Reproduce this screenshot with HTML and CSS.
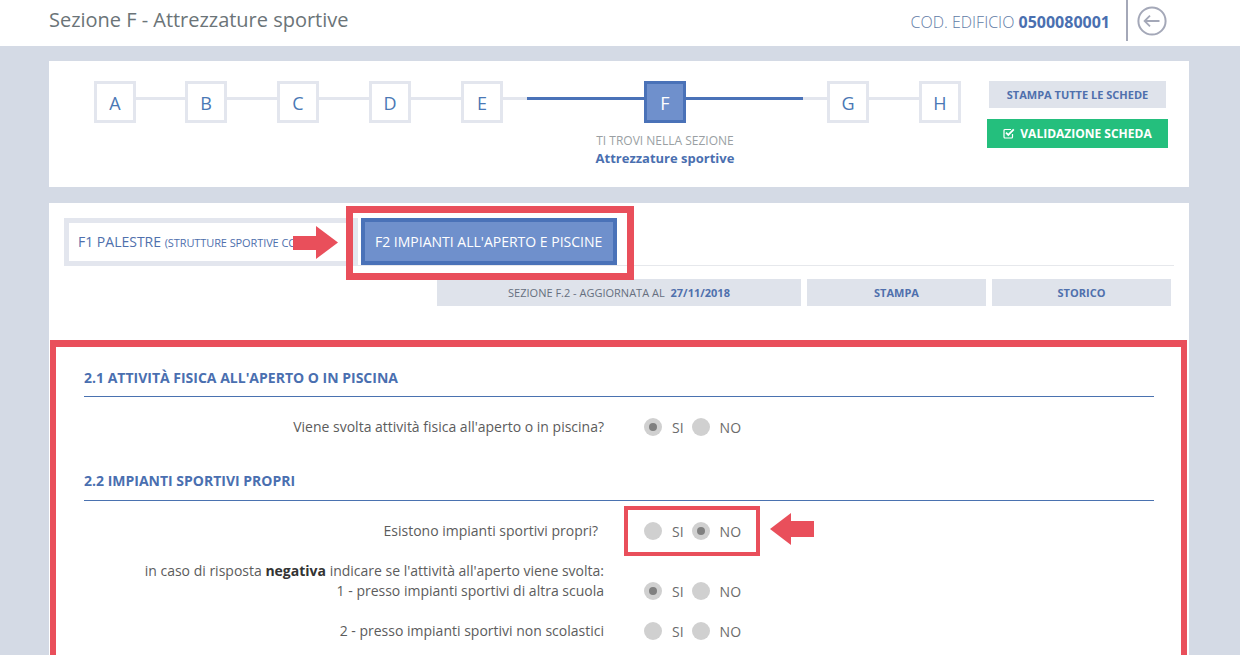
FILE: index.html
```html
<!DOCTYPE html>
<html lang="it">
<head>
<meta charset="utf-8">
<title>Sezione F - Attrezzature sportive</title>
<link rel="stylesheet" href="styles.css">
</head>
<body>
<header class="topbar">
  <h1 class="title">Sezione F - Attrezzature sportive</h1>
  <div class="code">COD. EDIFICIO <b>0500080001</b></div>
  <div class="back">
    <svg width="30" height="30" viewBox="0 0 30 30" fill="none" stroke="#a4a8b8" stroke-width="2"><circle cx="15" cy="15" r="13.6"/><path d="M22.5 15H8M13 9.6 7.6 15l5.4 5.4" stroke-width="1.8"/></svg>
  </div>
</header>
<main class="page">
  <section class="card steps-card">
    <div class="stepper-wrap">
      <div class="stepper">
        <span class="step">A</span><i class="link first-link"></i>
        <span class="step">B</span><i class="link"></i>
        <span class="step">C</span><i class="link"></i>
        <span class="step">D</span><i class="link"></i>
        <span class="step">E</span><i class="link short"></i><i class="link on"></i>
        <span class="step active">F</span><i class="link on"></i><i class="link short"></i>
        <span class="step">G</span><i class="link"></i>
        <span class="step">H</span>
      </div>
      <div class="here">
        <div class="here-l">TI TROVI NELLA SEZIONE</div>
        <div class="here-n">Attrezzature sportive</div>
      </div>
    </div>
    <div class="actions">
      <a class="btn-print">STAMPA TUTTE LE SCHEDE</a>
      <a class="btn-valid">
        <svg width="12" height="11" viewBox="0 0 12 11" fill="none" stroke="#fff"><path d="M9.5 6v3a1 1 0 0 1-1 1H2a1 1 0 0 1-1-1V2.500a1 1 0 0 1 1-1h6" stroke-width="1.200"/><path d="M3 4.600l2.300 2.300L10.800 1.400" stroke-width="1.800"/></svg>
        VALIDAZIONE SCHEDA</a>
    </div>
  </section>

  <section class="card form-card">
    <div class="tabs">
      <div class="tab">F1 PALESTRE <small>(STRUTTURE SPORTIVE COPERTE)</small></div>
      <div class="tab tab-on">F2 IMPIANTI ALL'APERTO E PISCINE</div>
      <div class="mark mark-tab"></div>
      <svg class="arrow arrow-tab" width="45" height="33" viewBox="0 0 45 33"><path fill="#e94f5b" d="M0 10H23V0L45 16.500 23 33V24H0Z"/></svg>
    </div>
    <div class="infobar">
      <div class="info wide">SEZIONE F.2 - AGGIORNATA AL <b>27/11/2018</b></div>
      <div class="info link-info">STAMPA</div>
      <div class="info link-info">STORICO</div>
    </div>
    <div class="highlight">
      <h2 class="sec first">2.1 ATTIVITÀ FISICA ALL'APERTO O IN PISCINA</h2>
      <div class="row r1">
        <div class="q">Viene svolta attività fisica all'aperto o in piscina?</div>
        <div class="opts"><i class="radio sel"></i><span class="si">SI</span><i class="radio"></i><span class="no">NO</span></div>
      </div>
      <h2 class="sec second">2.2 IMPIANTI SPORTIVI PROPRI</h2>
      <div class="row r2">
        <div class="q q-in">Esistono impianti sportivi propri?</div>
        <div class="opts"><i class="radio"></i><span class="si">SI</span><i class="radio sel"></i><span class="no">NO</span></div>
        <div class="mark mark-row"></div>
        <svg class="arrow arrow-row" width="44" height="32" viewBox="0 0 44 32"><path fill="#e94f5b" d="M44 8H21V0L0 16 21 32V24H44Z"/></svg>
      </div>
      <div class="row r3">
        <div class="q">in caso di risposta <b>negativa</b> indicare se l'attività all'aperto viene svolta:<br>1 - presso impianti sportivi di altra scuola</div>
        <div class="opts"><i class="radio sel"></i><span class="si">SI</span><i class="radio"></i><span class="no">NO</span></div>
      </div>
      <div class="row r4">
        <div class="q">2 - presso impianti sportivi non scolastici</div>
        <div class="opts"><i class="radio"></i><span class="si">SI</span><i class="radio"></i><span class="no">NO</span></div>
      </div>
    </div>
  </section>
</main>
</body>
</html>
```
FILE: styles.css
```css
* { box-sizing: border-box; }
html, body { margin: 0; height: 655px; overflow: hidden; }
body { background: #d4dae5; font-family: "Open Sans", "Liberation Sans", sans-serif; color: #555; }

.topbar { height: 46px; background: #fff; display: flex; align-items: flex-start; padding-left: 49px; }
.title { margin: 6px auto 0 0; font-size: 20px; line-height: 27px; font-weight: 400; color: #6b7478; letter-spacing: -.02px; }
.code { margin-top: 11px; font-size: 16px; line-height: 22px; font-weight: 300; color: #5f7ba6; }
.code b { font-weight: 700; color: #4a6fb0; }
.back { margin: 0 73px 0 16px; width: 41px; height: 41px; border-left: 2px solid #a4a8b8; padding: 6px 0 0 9px; }
.back svg { display: block; }

.page { padding: 15px 51px 0 49px; width: 1240px; }
.card { background: #fff; width: 1140px; }
.steps-card { height: 126px; display: flex; padding: 20px 21px 0 45px; margin-bottom: 16px; }
.stepper-wrap { width: 867px; }
.stepper { display: flex; align-items: flex-start; }
.step { width: 42px; height: 42px; flex: none; border: 3px solid #e3e6ee; display: flex; align-items: center; justify-content: center; font-size: 18px; color: #4a78b5; padding-top: 1px; }
.step.active { background: #6f90cc; border-color: #4a72b8; color: #fff; }
.link { display: block; flex: none; width: 50px; height: 3px; margin-top: 16px; background: #e3e6ee; }
.link.first-link { width: 49px; }
.link.short { width: 24px; }
.link.on { width: 117px; background: #4a72b8; }
.here { margin: 9px 0 0 0; padding-left: 340px; width: 802px; text-align: center; }
.here-l { font-size: 12px; line-height: 17px; color: #9a9fa3; }
.here-n { font-size: 13px; line-height: 18px; font-weight: 700; color: #4a6fb0; }

.actions { margin-left: 26px; width: 181px; display: flex; flex-direction: column; align-items: center; }
.btn-print { width: 177px; height: 27px; background: #dfe3eb; color: #4f70ad; font-size: 11px; font-weight: 700; display: flex; align-items: center; justify-content: center; }
.btn-valid { width: 181px; height: 29px; margin-top: 11px; background: #24bf7d; color: #fff; font-size: 12px; font-weight: 700; display: flex; align-items: center; justify-content: center; gap: 5px; }

.form-card { height: 480px; padding-top: 15px; }
.tabs { position: relative; display: flex; height: 48px; margin: 0 15px; border-bottom: 1px solid #e6e8ec; }
.tab { width: 294px; height: 48px; flex: none; border: 5px solid #e3e6ee; background: #fff; font-size: 14px; line-height: 38px; padding-left: 9px; color: #4f70ad; white-space: nowrap; overflow: hidden; }
.tab small { font-size: 11px; letter-spacing: -.1px; }
.tab-on { width: 256px; height: 47px; margin-left: 3px; border: 4px solid #4a72b8; background: #6f90cc; color: #fff; padding-left: 10px; line-height: 39px; }
.mark { position: absolute; border: 7px solid #e94f5b; }
.mark-tab { left: 282px; top: -12px; width: 288px; height: 74px; }
.arrow { position: absolute; display: block; }
.arrow-tab { left: 229px; top: 8px; }

.infobar { display: flex; gap: 6px; margin: 13px 18px 0 388px; height: 27px; }
.info { height: 27px; background: #dfe3eb; font-size: 11px; display: flex; align-items: center; justify-content: center; color: #666f80; white-space: pre; }
.info b { color: #4f70ad; margin-left: 3px; }
.wide { width: 364px; }
.link-info { width: 179px; color: #4f70ad; font-weight: 700; }

.highlight { margin: 34px 2px 0 1px; height: 340px; border: 6px solid #e94f5b; border-top-width: 7px; padding: 0 27px 0 28px; }
.sec { margin: 0; height: 34px; border-bottom: 1px solid #4a72b0; font-size: 14px; line-height: 20px; font-weight: 700; color: #4a6fb0; padding-top: 4px; }
.sec.first { margin-top: 17px; height: 33px; }
.sec.second { margin-top: 30px; height: 34px; }

.row { position: relative; display: flex; align-items: flex-start; }
.q { width: 520px; text-align: right; font-size: 14px; line-height: 20px; color: #5c5c5c; flex: none; }
.q b { color: #333; }
.q-in { padding-right: 6px; }
.opts { display: flex; align-items: center; margin-left: 40px; font-size: 14px; color: #6b6b6b; height: 20px; }
.radio { display: block; width: 18px; height: 18px; border-radius: 50%; background: #d0d0d0; position: relative; flex: none; }
.radio.sel::after { content: ""; position: absolute; left: 5px; top: 5px; width: 8px; height: 8px; border-radius: 50%; background: #808080; }
.si { margin: 0 8px 0 10px; }
.no { margin-left: 10px; }
.r1 { margin-top: 20px; }
.r2 { margin-top: 20px; }
.r3 { margin-top: 20px; }
.r3 .opts { margin-top: 20px; }
.r4 { margin-top: 20px; }
.mark-row { left: 540px; top: -15px; width: 136px; height: 50px; border-width: 4px; }
.arrow-row { left: 686px; top: -8px; }
```
